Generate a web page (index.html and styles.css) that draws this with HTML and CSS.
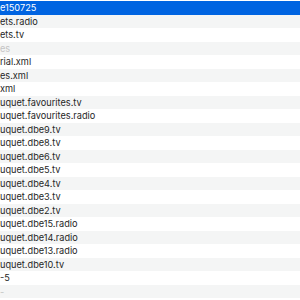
FILE: index.html
```html
<!DOCTYPE html>
<html lang="en">
<head>
    <meta charset="UTF-8">
    <title>Files</title>
    <link rel="stylesheet" href="styles.css">
</head>
<body>
    <!-- File list, scrolled to the right so names are clipped on the left -->
    <ul class="file-list">
        <li class="row selected"><span class="name">e150725</span></li>
        <li class="row"><span class="name">ets.radio</span></li>
        <li class="row"><span class="name">ets.tv</span></li>
        <li class="row"><span class="name dim">es</span></li>
        <li class="row"><span class="name">rial.xml</span></li>
        <li class="row"><span class="name">es.xml</span></li>
        <li class="row"><span class="name">xml</span></li>
        <li class="row"><span class="name">uquet.favourites.tv</span></li>
        <li class="row"><span class="name">uquet.favourites.radio</span></li>
        <li class="row"><span class="name">uquet.dbe9.tv</span></li>
        <li class="row"><span class="name">uquet.dbe8.tv</span></li>
        <li class="row"><span class="name">uquet.dbe6.tv</span></li>
        <li class="row"><span class="name">uquet.dbe5.tv</span></li>
        <li class="row"><span class="name">uquet.dbe4.tv</span></li>
        <li class="row"><span class="name">uquet.dbe3.tv</span></li>
        <li class="row"><span class="name">uquet.dbe2.tv</span></li>
        <li class="row"><span class="name">uquet.dbe15.radio</span></li>
        <li class="row"><span class="name">uquet.dbe14.radio</span></li>
        <li class="row"><span class="name">uquet.dbe13.radio</span></li>
        <li class="row"><span class="name">uquet.dbe10.tv</span></li>
        <li class="row"><span class="name">-5</span></li>
        <li class="row"><span class="name dim">-</span></li>
        <li class="row"><span class="name"></span></li>
    </ul>
</body>
</html>
```

FILE: styles.css
```css
body {
    margin: 0;
    background-color: #ffffff;
    font-family: Inter, "Liberation Sans", sans-serif;
    font-size: 9.2px;
    color: #262626;
    overflow: hidden;
}

/* List of files */
.file-list {
    list-style: none;
    margin: 0;
    padding: 1px 0 0 0;
}

.row {
    height: 13.5px;
    line-height: 13.5px;
    white-space: nowrap;
    overflow: hidden;
}

.row:nth-child(even) {
    background-color: #f4f5f5;
}

.row.selected {
    background-color: #0064e1;
    color: #ffffff;
}

.name {
    display: block;
}

.name.dim {
    color: #c4c4c4;
}
```
